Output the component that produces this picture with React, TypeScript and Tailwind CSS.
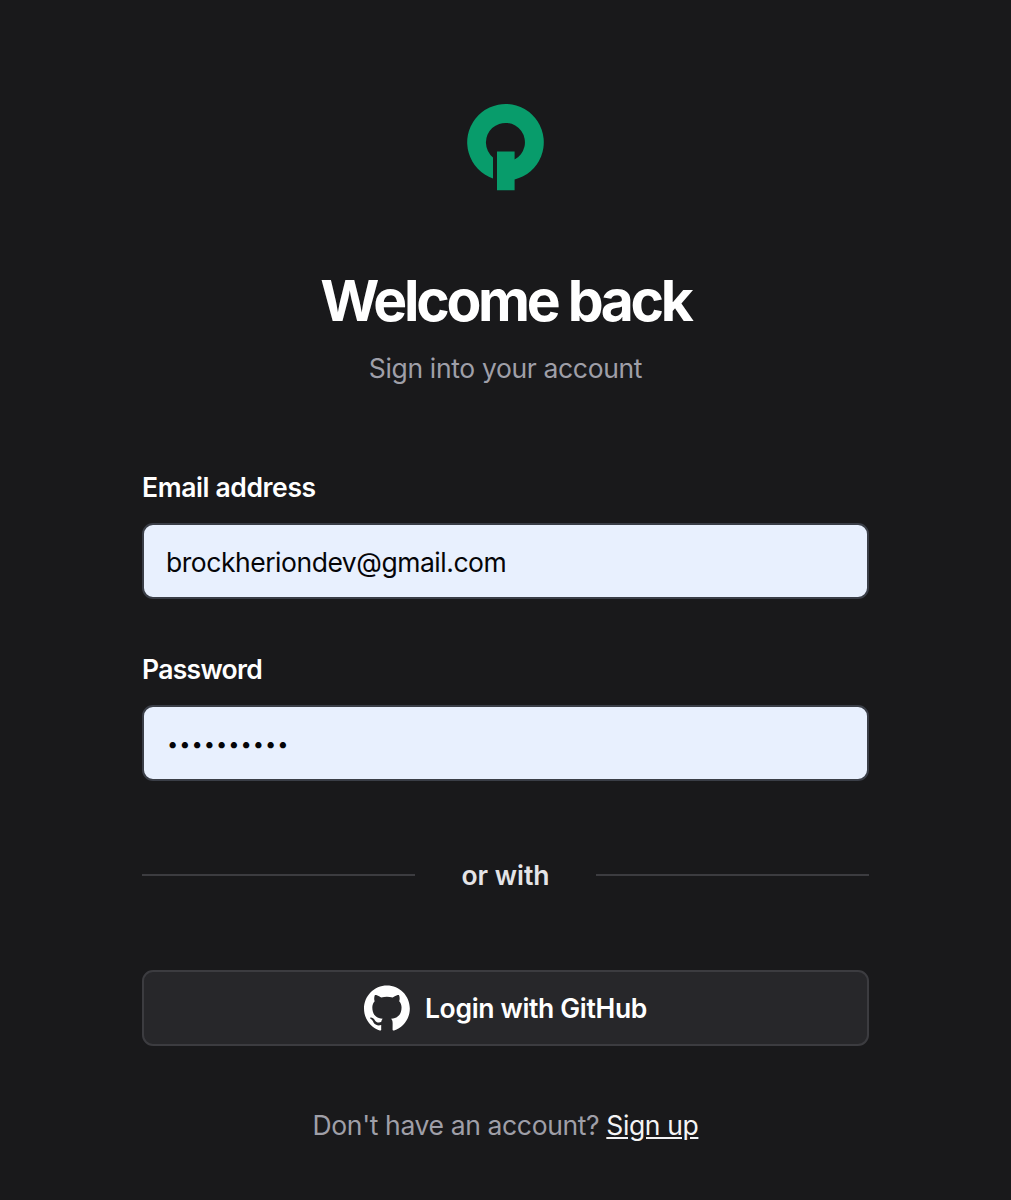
import React from "react";

function Logo() {
  return (
    <svg className="h-[88px] w-[78px]" viewBox="0 0 78 88" fill="#089c6b" aria-label="Logo">
      <path d="M26 75.5A38.3 38.3 0 1 1 47.6 76.5V87.3H30V48.6H47.6V56.6A19.5 19.5 0 1 0 26 54.4Z" />
    </svg>
  );
}

function GitHubMark() {
  return (
    <svg className="h-[46px] w-[46px] shrink-0" viewBox="0 0 98 96" fill="white" aria-hidden="true">
      <path
        fillRule="evenodd"
        clipRule="evenodd"
        d="M48.854 0C21.839 0 0 22 0 49.217c0 21.756 13.993 40.172 33.405 46.69 2.427.49 3.316-1.059 3.316-2.362 0-1.141-.08-5.052-.08-9.127-13.59 2.934-16.42-5.867-16.42-5.867-2.184-5.704-5.42-7.17-5.42-7.17-4.448-3.015.324-3.015.324-3.015 4.934.326 7.523 5.052 7.523 5.052 4.367 7.496 11.404 5.378 14.235 4.074.404-3.178 1.699-5.378 3.074-6.6-10.839-1.141-22.243-5.378-22.243-24.283 0-5.378 1.94-9.778 5.014-13.2-.485-1.222-2.184-6.275.486-13.038 0 0 4.125-1.304 13.426 5.052a46.97 46.97 0 0 1 12.214-1.63c4.125 0 8.33.571 12.213 1.63 9.302-6.356 13.427-5.052 13.427-5.052 2.67 6.763.97 11.816.485 13.038 3.155 3.422 5.015 7.822 5.015 13.2 0 18.905-11.404 23.06-22.324 24.283 1.78 1.548 3.316 4.481 3.316 9.126 0 6.6-.08 11.897-.08 13.526 0 1.304.89 2.853 3.316 2.364 19.412-6.52 33.405-24.935 33.405-46.691C97.707 22 75.788 0 48.854 0z"
      />
    </svg>
  );
}

function Field({ label, children }: { label: React.ReactNode; children: React.ReactNode }) {
  return (
    <div>
      <div className="h-9 font-semibold leading-9 text-white">{label}</div>
      <div className="mt-[18px] flex h-[76px] items-center rounded-[11px] border-2 border-[#3a3e47] bg-[#e8f0fe] px-[22px] pt-[3px] text-[#050508]">
        {children}
      </div>
    </div>
  );
}

export default function App() {
  return (
    <div className="flex h-[1200px] w-full flex-col items-center bg-[#19191b] pt-[103px] font-['Inter',sans-serif] text-[26.5px]">
      <Logo />
      <h1 className="mt-[74px] h-[72px] whitespace-nowrap text-[57px] font-bold leading-[72px] tracking-[-3.3px] text-white">
        Welcome back
      </h1>
      <p className="mt-[13px] h-9 whitespace-nowrap leading-9 tracking-[-0.35px] text-[#9f9fa8]">
        Sign into your account
      </p>
      <div className="mt-[83px] flex w-[727px] flex-col gap-[52px]">
        <Field label={<span className="tracking-[-0.38px]">Email address</span>}>
          <span className="tracking-[-0.47px]">brockheriondev@gmail.com</span>
        </Field>
        <Field label={<span className="tracking-[-0.7px]">Password</span>}>
          <span className="mb-0.5 pl-px text-[20px] tracking-[1px]">••••••••••</span>
        </Field>
      </div>
      <div className="mt-[77px] flex h-9 w-[727px] items-center justify-between">
        <div className="mb-0.5 h-0.5 w-[273px] bg-[#3c3c40]" />
        <span className="font-semibold text-[#e4e4e7]">or with</span>
        <div className="mb-0.5 h-0.5 w-[273px] bg-[#3c3c40]" />
      </div>
      <button className="mt-[76px] flex h-[76px] w-[727px] items-center justify-center gap-[15px] rounded-[11px] border-2 border-[#3c3c40] bg-[#27272a] font-semibold text-white">
        <GitHubMark />
        <span className="pt-0.5 tracking-[-0.33px]">Login with GitHub</span>
      </button>
      <p className="mt-[61px] h-9 whitespace-nowrap leading-9 tracking-[-0.37px] text-[#9f9fa8]">
        <span>Don't have an account? </span>
        <a className="text-[#f4f4f5] underline">Sign up</a>
      </p>
    </div>
  );
}
